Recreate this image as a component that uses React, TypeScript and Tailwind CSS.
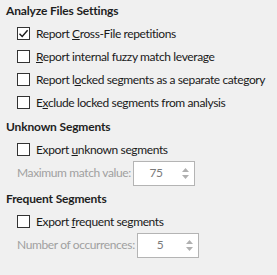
import React from "react";

function Check({ checked }: { checked?: boolean }) {
  return (
    <span className="relative flex h-[13px] w-[13px] shrink-0 items-center justify-center border border-[#333333] bg-white">
      {checked && (
        <svg width="11" height="11" viewBox="0 0 11 11" className="block">
          <path d="M1.5 5.8 L4.2 8.5 L9.6 2.2" fill="none" stroke="#1a1a1a" strokeWidth="1.4" />
        </svg>
      )}
    </span>
  );
}

function Row({ checked, children }: { checked?: boolean; children: React.ReactNode }) {
  return (
    <div className="flex h-[23px] items-center gap-[6px] pl-[17px] whitespace-nowrap text-[#1a1a1a]">
      <Check checked={checked} />
      <span>{children}</span>
    </div>
  );
}

function Heading({ children }: { children: React.ReactNode }) {
  return (
    <div className="flex h-[22px] items-center pl-[6px] font-bold tracking-[-0.16px] text-[#1e1e1e]">
      {children}
    </div>
  );
}

function Spin({ label, labelW, value }: { label: string; labelW: string; value: string }) {
  return (
    <div className="flex h-[24px] items-center pl-[17px] whitespace-nowrap">
      <span className={`${labelW} shrink-0 text-[#a0a0a0]`}>{label}</span>
      <div className="flex h-[25px] w-[62px] items-center border border-[#b4b4b4] bg-white">
        <span className="flex-1 pl-[2px] text-center text-[#7a7a7a]">{value}</span>
        <span className="flex w-[18px] flex-col items-center gap-[3px]">
          <svg width="7" height="4" viewBox="0 0 7 4" className="block">
            <path d="M0 4 L3.5 0 L7 4 Z" fill="#b0b0b0" />
          </svg>
          <svg width="7" height="4" viewBox="0 0 7 4" className="block">
            <path d="M0 0 L3.5 4 L7 0 Z" fill="#b0b0b0" />
          </svg>
        </span>
      </div>
    </div>
  );
}

export default function App() {
  return (
    <div
      className="h-[275px] w-[277px] overflow-hidden bg-[#f0f0f0] text-[12px] leading-none tracking-[-0.38px]"
      style={{ fontFamily: "Lato, 'Open Sans', sans-serif" }}
    >
      <Heading>Analyze Files Settings</Heading>
      <Row checked>
        Report <u>C</u>ross-File repetitions
      </Row>
      <Row>
        <u>R</u>eport internal fuzzy match leverage
      </Row>
      <Row>
        Report l<u>o</u>cked segments as a separate category
      </Row>
      <Row>
        E<u>x</u>clude locked segments from analysis
      </Row>
      <div className="mt-[2px]">
        <Heading>Unknown Segments</Heading>
      </div>
      <Row>
        Export <u>u</u>nknown segments
      </Row>
      <Spin label="Maximum match value:" labelW="w-[116px]" value="75" />
      <div className="mt-[3px]">
        <Heading>Frequent Segments</Heading>
      </div>
      <Row>
        Export <u>f</u>requent segments
      </Row>
      <Spin label="Number of occurrences:" labelW="w-[120px]" value="5" />
    </div>
  );
}
